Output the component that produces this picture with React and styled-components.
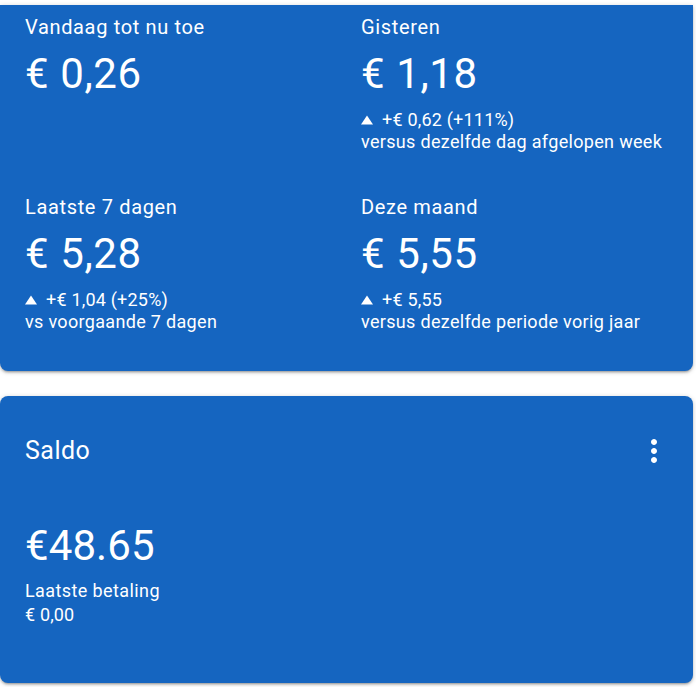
import React from "react";
import styled, { createGlobalStyle } from "styled-components";

const GlobalStyle = createGlobalStyle`
    html, body {
        margin: 0;
        padding: 0;
        background: #ffffff;
    }
    body {
        font-family: Roboto, "Liberation Sans", sans-serif;
        -webkit-font-smoothing: antialiased;
    }
`;

const Page = styled.div`
    display: flex;
    flex-direction: column;
    gap: 25px;
    padding: 5px 3px 4px 0;
    width: 696px;
    box-sizing: border-box;
`;

const Card = styled.section`
    background: #1565c0;
    color: #ffffff;
    border-radius: ${(props) => (props.cut ? "0 0 8px 8px" : "8px")};
    box-shadow: 0 2px 2px rgba(0, 0, 0, 0.14), 0 3px 1px -2px rgba(0, 0, 0, 0.12),
        0 1px 5px rgba(0, 0, 0, 0.2);
`;

const StatsGrid = styled.div`
    display: grid;
    grid-template-columns: 336px 1fr;
    row-gap: 42px;
    padding: 10px 0 38px 25px;
`;

const Stat = styled.div`
    display: flex;
    flex-direction: column;
`;

const Label = styled.div`
    font-size: 20px;
    line-height: 24px;
    letter-spacing: 0.65px;
`;

const Amount = styled.div`
    font-size: 42px;
    line-height: 48px;
    letter-spacing: 0.6px;
    margin-top: 11px;
`;

const Change = styled.div`
    display: flex;
    align-items: center;
    gap: 9px;
    margin-top: 11px;
    font-size: 18px;
    line-height: 22px;
    letter-spacing: 0.2px;
`;

const Compare = styled.div`
    font-size: 18px;
    line-height: 22px;
    letter-spacing: 0.32px;
`;

const Up = () => (
    <svg width="12" height="10" viewBox="0 0 12 10" style={{ flex: "none" }}>
        <polygon points="6,0.5 12,9.5 0,9.5" fill="#ffffff" />
    </svg>
);

const BalanceBody = styled.div`
    padding: 37px 21px 56px 25px;
`;

const BalanceHead = styled.div`
    display: flex;
    justify-content: space-between;
    align-items: center;
`;

const Title = styled.h2`
    margin: 0;
    font-weight: 400;
    font-size: 25px;
    line-height: 36px;
    letter-spacing: 0.5px;
`;

const MenuButton = styled.button`
    width: 36px;
    height: 36px;
    padding: 0;
    border: 0;
    background: none;
    color: #ffffff;
    display: flex;
    align-items: center;
    justify-content: center;
`;

const Balance = styled.div`
    font-size: 42px;
    line-height: 48px;
    letter-spacing: 0.1px;
    margin-top: 53px;
`;

const PayLabel = styled.div`
    font-size: 18px;
    line-height: 24px;
    letter-spacing: 0.4px;
    margin-top: 9px;
`;

const PayValue = styled.div`
    font-size: 18px;
    line-height: 24px;
    letter-spacing: 0.15px;
`;

const stats = [
    { label: "Vandaag tot nu toe", amount: "€ 0,26" },
    {
        label: "Gisteren",
        amount: "€ 1,18",
        change: "+€ 0,62 (+111%)",
        compare: "versus dezelfde dag afgelopen week",
    },
    {
        label: "Laatste 7 dagen",
        amount: "€ 5,28",
        change: "+€ 1,04 (+25%)",
        compare: "vs voorgaande 7 dagen",
    },
    {
        label: "Deze maand",
        amount: "€ 5,55",
        change: "+€ 5,55",
        compare: "versus dezelfde periode vorig jaar",
    },
];

const App = () => {
    return (
        <>
            <GlobalStyle />
            <Page>
                <Card cut>
                    <StatsGrid>
                        {stats.map((s) => (
                            <Stat key={s.label}>
                                <Label>{s.label}</Label>
                                <Amount>{s.amount}</Amount>
                                {s.change && (
                                    <Change>
                                        <Up />
                                        {s.change}
                                    </Change>
                                )}
                                {s.compare && <Compare>{s.compare}</Compare>}
                            </Stat>
                        ))}
                    </StatsGrid>
                </Card>
                <Card>
                    <BalanceBody>
                        <BalanceHead>
                            <Title>Saldo</Title>
                            <MenuButton aria-label="Meer">
                                <svg width="36" height="36" viewBox="0 0 24 24" fill="currentColor">
                                    <path d="M12 8c1.1 0 2-.9 2-2s-.9-2-2-2-2 .9-2 2 .9 2 2 2zm0 2c-1.1 0-2 .9-2 2s.9 2 2 2 2-.9 2-2-.9-2-2-2zm0 6c-1.1 0-2 .9-2 2s.9 2 2 2 2-.9 2-2-.9-2-2-2z" />
                                </svg>
                            </MenuButton>
                        </BalanceHead>
                        <Balance>€48.65</Balance>
                        <PayLabel>Laatste betaling</PayLabel>
                        <PayValue>€ 0,00</PayValue>
                    </BalanceBody>
                </Card>
            </Page>
        </>
    );
};

export default App;
